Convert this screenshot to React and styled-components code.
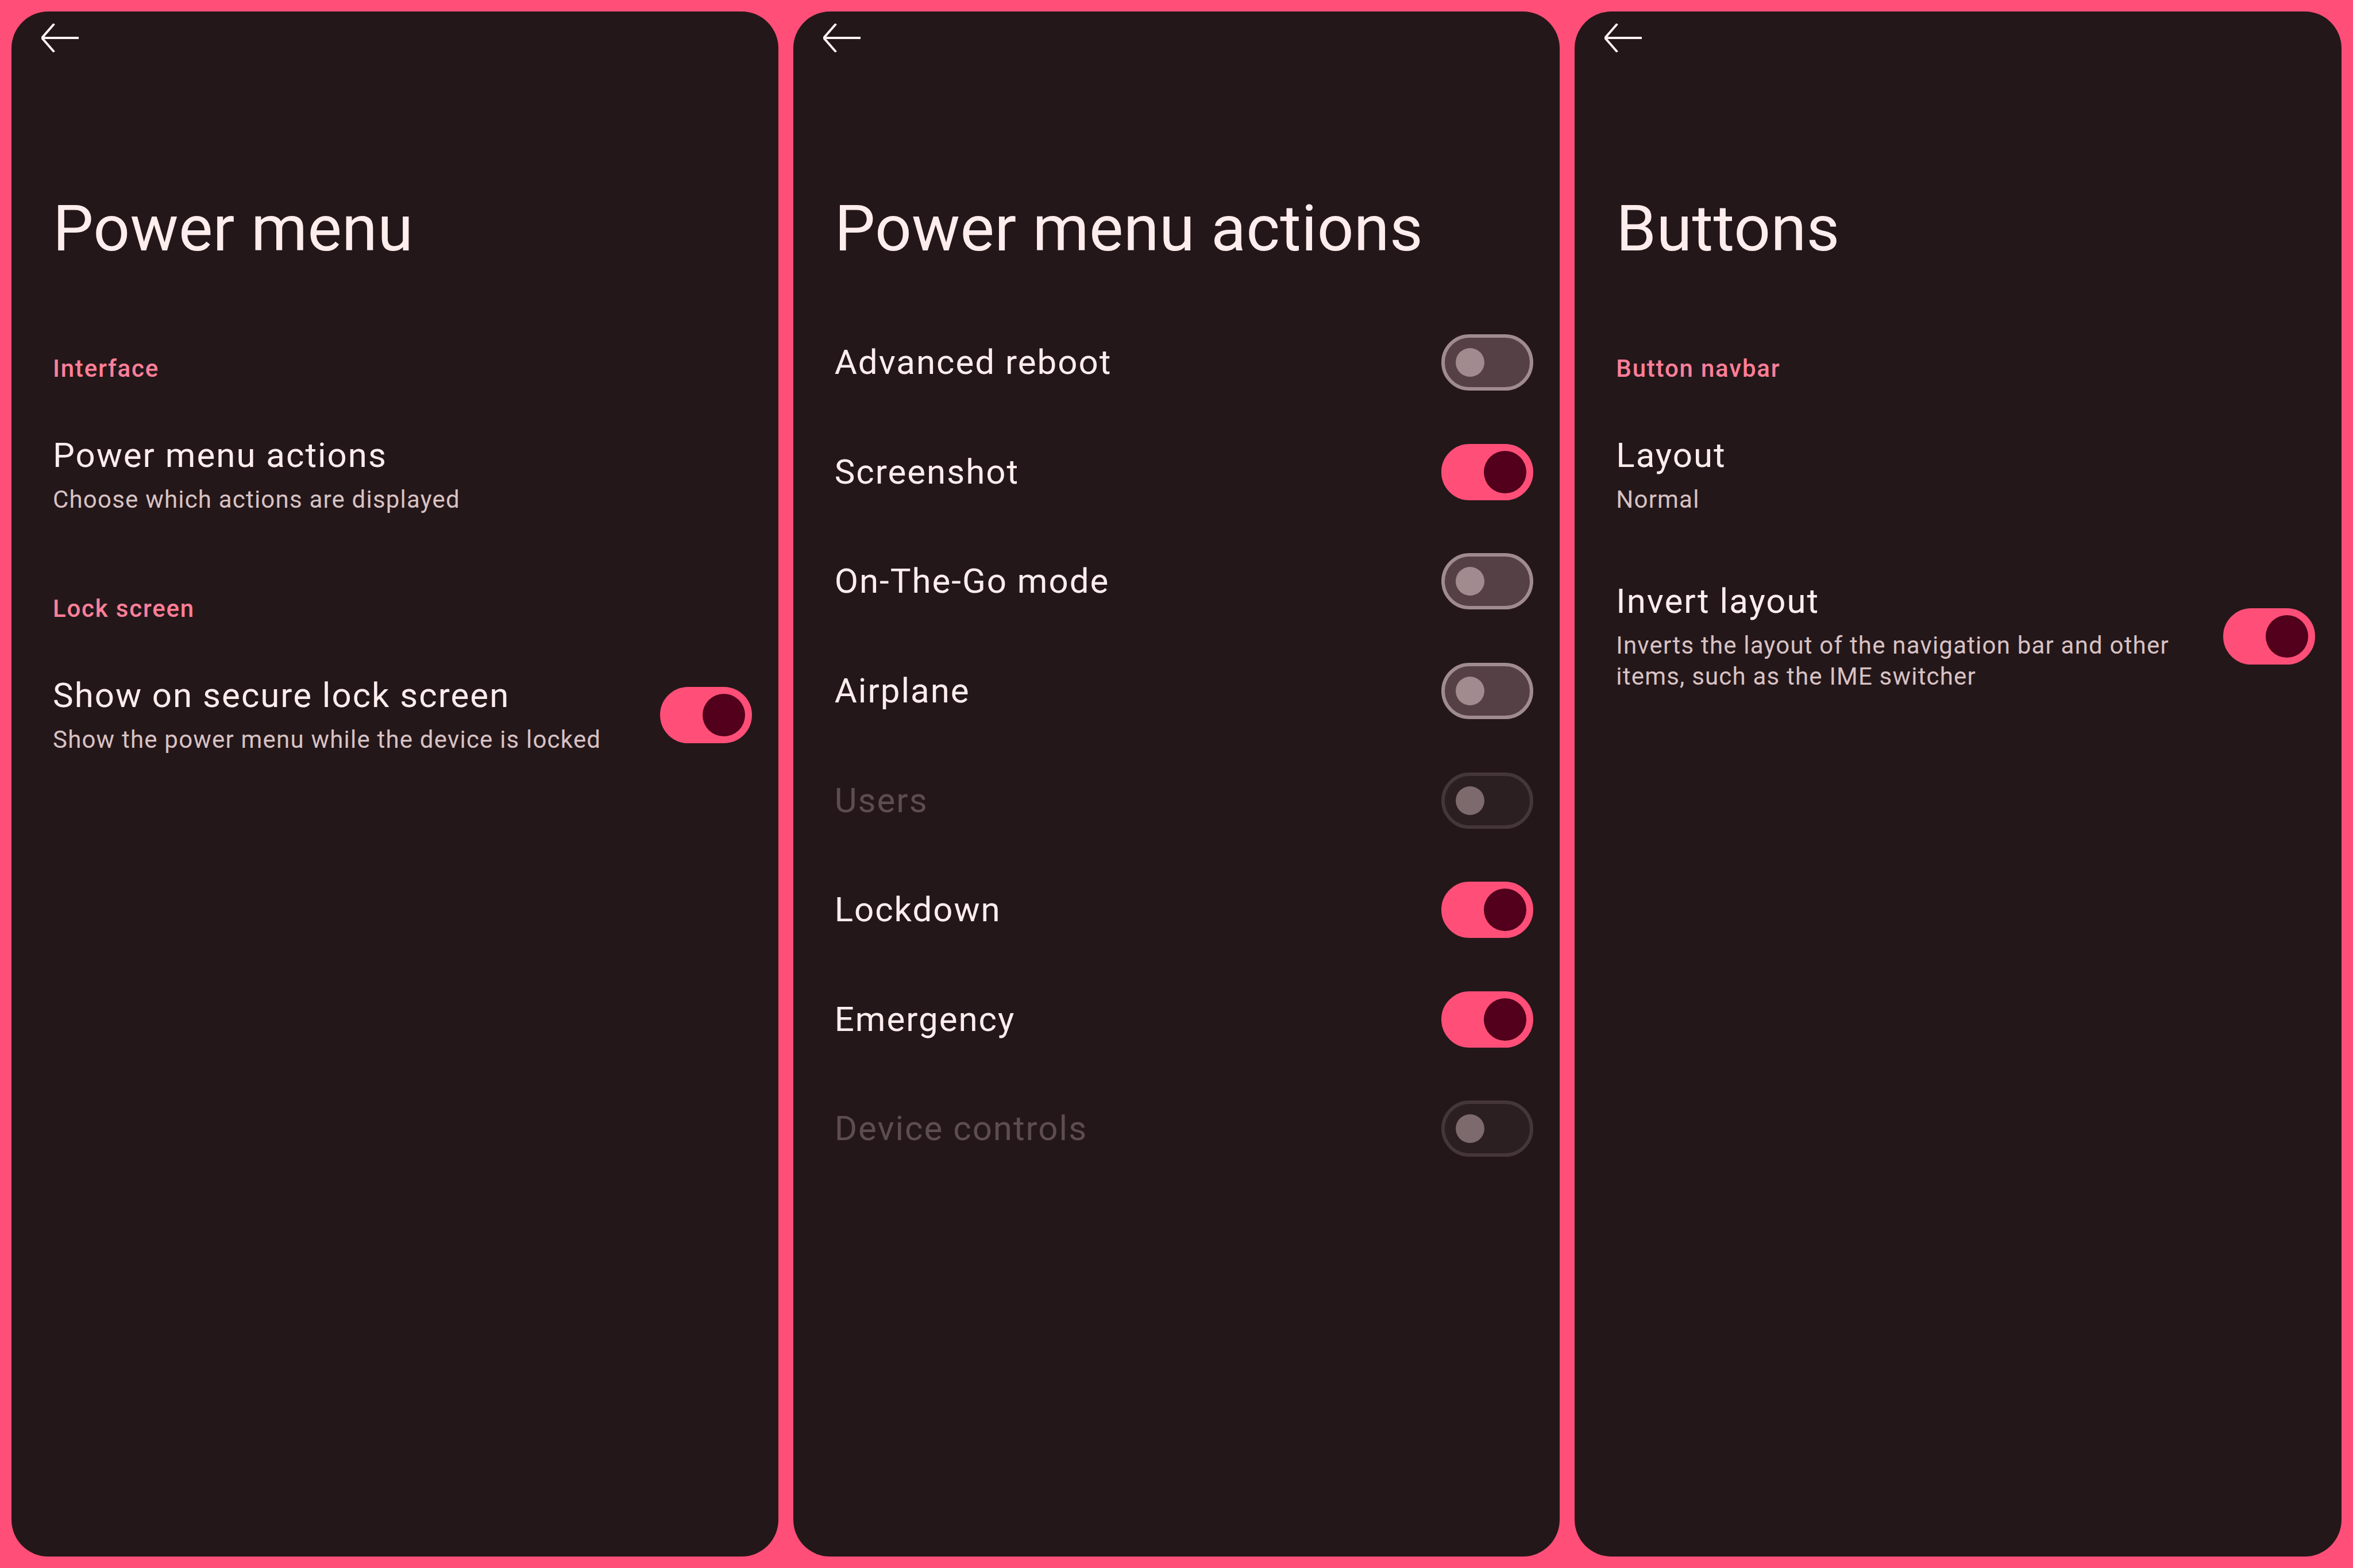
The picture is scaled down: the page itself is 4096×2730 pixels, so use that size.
import React from 'react';
import styled, { createGlobalStyle } from 'styled-components';

const Global = createGlobalStyle`
  html, body {
    margin: 0;
    padding: 0;
    background: #ff4f78;
  }
  body {
    font-family: Roboto, "Noto Sans", sans-serif;
  }
`;

const Screen = styled.div`
  box-sizing: border-box;
  width: 4096px;
  height: 2730px;
  padding: 20px;
  display: grid;
  grid-template-columns: repeat(3, 1fr);
  gap: 26px;
  background: #ff4f78;
`;

const Card = styled.section`
  background: #241719;
  border-radius: 64px;
  overflow: hidden;
  display: flex;
  flex-direction: column;
`;

const TopBar = styled.div`
  height: 92px;
  display: flex;
  align-items: center;
  padding-left: 52px;
`;

const BigTitle = styled.h1`
  margin: 220px 0 0;
  padding: 0 72px 72px;
  font-size: 112px;
  line-height: 132px;
  font-weight: 400;
  letter-spacing: 0.3px;
  color: #ffeded;
`;

const Category = styled.div`
  padding: 78px 72px 30px;
  font-size: 42px;
  line-height: 56px;
  font-weight: 500;
  letter-spacing: 1.8px;
  color: #ff7f99;
`;

const Item = styled.div`
  box-sizing: border-box;
  min-height: 190.6px;
  display: flex;
  align-items: center;
  padding: 46px 46px 46px 72px;
`;

const Texts = styled.div`
  flex: 1;
  min-width: 0;
  padding: 11px 0;
`;

const Title = styled.div`
  font-size: 60px;
  line-height: 72px;
  letter-spacing: 2px;
  color: ${p => (p.$disabled ? '#5e4d50' : '#ffeded')};
`;

const Summary = styled.div`
  margin-top: 14px;
  font-size: 42px;
  line-height: 54px;
  letter-spacing: 1.2px;
  color: #d8c2c4;
`;

const Widget = styled.div`
  margin-left: 56px;
  flex: none;
`;

const Track = styled.div`
  box-sizing: border-box;
  width: 160px;
  height: 98px;
  border-radius: 49px;
  display: flex;
  align-items: center;
  justify-content: ${p => (p.$on ? 'flex-end' : 'flex-start')};
  padding: 0 ${p => (p.$on ? 6 : 19)}px;
  border: 6px solid ${p => (p.$on ? '#ff4f78' : p.$disabled ? '#453739' : '#a08b8e')};
  background: ${p => (p.$on ? '#ff4f78' : p.$disabled ? '#2b1f21' : '#554145')};
`;

const Thumb = styled.div`
  width: ${p => (p.$on ? 74 : 50)}px;
  height: ${p => (p.$on ? 74 : 50)}px;
  border-radius: 50%;
  background: ${p => (p.$on ? '#52001b' : p.$disabled ? '#7d6a6c' : '#a28b8e')};
`;

const BackArrow = () => (
  <svg width="66" height="50" viewBox="0 0 66 50" fill="none">
    <path d="M21 2 L1 25 L21 48 M1 25 H63" stroke="#fff2f2" strokeWidth="4" strokeLinecap="square" strokeLinejoin="miter" />
  </svg>
);

const Switch = ({ on, disabled }) => (
  <Widget>
    <Track $on={on} $disabled={disabled}>
      <Thumb $on={on} $disabled={disabled} />
    </Track>
  </Widget>
);

const Pref = ({ title, summary, toggle, on, disabled }) => (
  <Item>
    <Texts>
      <Title $disabled={disabled}>{title}</Title>
      {summary && <Summary>{summary}</Summary>}
    </Texts>
    {toggle && <Switch on={on} disabled={disabled} />}
  </Item>
);

const actions = [
  { title: 'Advanced reboot', on: false },
  { title: 'Screenshot', on: true },
  { title: 'On-The-Go mode', on: false },
  { title: 'Airplane', on: false },
  { title: 'Users', on: false, disabled: true },
  { title: 'Lockdown', on: true },
  { title: 'Emergency', on: true },
  { title: 'Device controls', on: false, disabled: true },
];

const Page = ({ title, children }) => (
  <Card>
    <TopBar>
      <BackArrow />
    </TopBar>
    <BigTitle>{title}</BigTitle>
    {children}
  </Card>
);

export default function App() {
  return (
    <>
      <Global />
      <Screen>
        <Page title="Power menu">
          <Category>Interface</Category>
          <Pref title="Power menu actions" summary="Choose which actions are displayed" />
          <Category>Lock screen</Category>
          <Pref
            title="Show on secure lock screen"
            summary="Show the power menu while the device is locked"
            toggle
            on
          />
        </Page>
        <Page title="Power menu actions">
          {actions.map(a => (
            <Pref key={a.title} title={a.title} toggle on={a.on} disabled={a.disabled} />
          ))}
        </Page>
        <Page title="Buttons">
          <Category>Button navbar</Category>
          <Pref title="Layout" summary="Normal" />
          <Pref
            title="Invert layout"
            summary="Inverts the layout of the navigation bar and other items, such as the IME switcher"
            toggle
            on
          />
        </Page>
      </Screen>
    </>
  );
}
